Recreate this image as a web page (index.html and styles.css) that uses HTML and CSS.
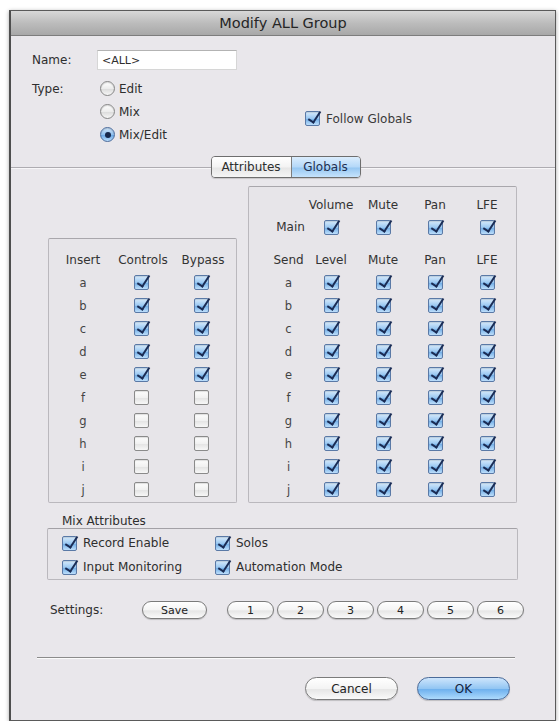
FILE: index.html
```html
<!DOCTYPE html>
<html>
<head>
<meta charset="utf-8">
<title>Modify ALL Group</title>
<link rel="stylesheet" href="styles.css">
</head>
<body>
<div class="dialog">
  <div class="titlebar">Modify ALL Group</div>

  <div class="name-row">
    <span class="lbl-name">Name:</span>
    <div class="name-input">&lt;ALL&gt;</div>
  </div>

  <div class="type-row">
    <span class="lbl-type">Type:</span>
    <div class="radios">
      <div class="radio-item"><span class="radio"></span><span>Edit</span></div>
      <div class="radio-item"><span class="radio"></span><span>Mix</span></div>
      <div class="radio-item"><span class="radio on"><span class="dot"></span></span><span>Mix/Edit</span></div>
    </div>
    <div class="follow"><i class="cb on"></i><span>Follow Globals</span></div>
  </div>

  <div class="tabrow">
    <div class="tabs">
      <div class="tab tab-attr">Attributes</div>
      <div class="tab tab-glob">Globals</div>
    </div>
  </div>

  <div class="boxes">
    <div class="box box-insert">
      <div class="grid-insert">
        <span class="hd">Insert</span><span class="hd">Controls</span><span class="hd">Bypass</span>
        <span class="lt">a</span><span class="cell"><i class="cb on"></i></span><span class="cell"><i class="cb on"></i></span>
        <span class="lt">b</span><span class="cell"><i class="cb on"></i></span><span class="cell"><i class="cb on"></i></span>
        <span class="lt">c</span><span class="cell"><i class="cb on"></i></span><span class="cell"><i class="cb on"></i></span>
        <span class="lt">d</span><span class="cell"><i class="cb on"></i></span><span class="cell"><i class="cb on"></i></span>
        <span class="lt">e</span><span class="cell"><i class="cb on"></i></span><span class="cell"><i class="cb on"></i></span>
        <span class="lt">f</span><span class="cell"><i class="cb"></i></span><span class="cell"><i class="cb"></i></span>
        <span class="lt">g</span><span class="cell"><i class="cb"></i></span><span class="cell"><i class="cb"></i></span>
        <span class="lt">h</span><span class="cell"><i class="cb"></i></span><span class="cell"><i class="cb"></i></span>
        <span class="lt">i</span><span class="cell"><i class="cb"></i></span><span class="cell"><i class="cb"></i></span>
        <span class="lt">j</span><span class="cell"><i class="cb"></i></span><span class="cell"><i class="cb"></i></span>
      </div>
    </div>

    <div class="box box-globals">
      <div class="grid-globals">
        <span></span><span class="hd">Volume</span><span class="hd">Mute</span><span class="hd">Pan</span><span class="hd">LFE</span>
        <span class="lt main">Main</span><span class="cell"><i class="cb on"></i></span><span class="cell"><i class="cb on"></i></span><span class="cell"><i class="cb on"></i></span><span class="cell"><i class="cb on"></i></span>
        <span class="spacer"></span>
        <span class="hd">Send</span><span class="hd">Level</span><span class="hd">Mute</span><span class="hd">Pan</span><span class="hd">LFE</span>
        <span class="lt">a</span><span class="cell"><i class="cb on"></i></span><span class="cell"><i class="cb on"></i></span><span class="cell"><i class="cb on"></i></span><span class="cell"><i class="cb on"></i></span>
        <span class="lt">b</span><span class="cell"><i class="cb on"></i></span><span class="cell"><i class="cb on"></i></span><span class="cell"><i class="cb on"></i></span><span class="cell"><i class="cb on"></i></span>
        <span class="lt">c</span><span class="cell"><i class="cb on"></i></span><span class="cell"><i class="cb on"></i></span><span class="cell"><i class="cb on"></i></span><span class="cell"><i class="cb on"></i></span>
        <span class="lt">d</span><span class="cell"><i class="cb on"></i></span><span class="cell"><i class="cb on"></i></span><span class="cell"><i class="cb on"></i></span><span class="cell"><i class="cb on"></i></span>
        <span class="lt">e</span><span class="cell"><i class="cb on"></i></span><span class="cell"><i class="cb on"></i></span><span class="cell"><i class="cb on"></i></span><span class="cell"><i class="cb on"></i></span>
        <span class="lt">f</span><span class="cell"><i class="cb on"></i></span><span class="cell"><i class="cb on"></i></span><span class="cell"><i class="cb on"></i></span><span class="cell"><i class="cb on"></i></span>
        <span class="lt">g</span><span class="cell"><i class="cb on"></i></span><span class="cell"><i class="cb on"></i></span><span class="cell"><i class="cb on"></i></span><span class="cell"><i class="cb on"></i></span>
        <span class="lt">h</span><span class="cell"><i class="cb on"></i></span><span class="cell"><i class="cb on"></i></span><span class="cell"><i class="cb on"></i></span><span class="cell"><i class="cb on"></i></span>
        <span class="lt">i</span><span class="cell"><i class="cb on"></i></span><span class="cell"><i class="cb on"></i></span><span class="cell"><i class="cb on"></i></span><span class="cell"><i class="cb on"></i></span>
        <span class="lt">j</span><span class="cell"><i class="cb on"></i></span><span class="cell"><i class="cb on"></i></span><span class="cell"><i class="cb on"></i></span><span class="cell"><i class="cb on"></i></span>
      </div>
    </div>
  </div>

  <div class="mix-label">Mix Attributes</div>
  <div class="mix-box">
    <div class="opt"><i class="cb on"></i><span>Record Enable</span></div>
    <div class="opt"><i class="cb on"></i><span>Solos</span></div>
    <div class="opt"><i class="cb on"></i><span>Input Monitoring</span></div>
    <div class="opt"><i class="cb on"></i><span>Automation Mode</span></div>
  </div>

  <div class="settings">
    <span class="settings-lbl">Settings:</span>
    <div class="btn btn-sm btn-save">Save</div>
    <div class="nums">
      <div class="btn btn-sm btn-num">1</div>
      <div class="btn btn-sm btn-num">2</div>
      <div class="btn btn-sm btn-num">3</div>
      <div class="btn btn-sm btn-num">4</div>
      <div class="btn btn-sm btn-num">5</div>
      <div class="btn btn-sm btn-num">6</div>
    </div>
  </div>

  <div class="sep"></div>

  <div class="actions">
    <div class="btn btn-lg">Cancel</div>
    <div class="btn btn-lg btn-ok">OK</div>
  </div>
</div>
</body>
</html>
```
FILE: styles.css
```css
* { box-sizing: border-box; }

body {
  margin: 0;
  padding: 10px 0 0 9px;
  background: #ffffff;
  font-family: "DejaVu Sans", "Liberation Sans", sans-serif;
  font-size: 12px;
  color: #2e2e2e;
}

.dialog {
  width: 547px;
  height: 711px;
  border: 1px solid #5a5a5a;
  border-left: 2px solid #4e4e4e;
  background: #e9e7eb;
  box-shadow: 0 1px 4px rgba(0, 0, 0, 0.35);
  display: flex;
  flex-direction: column;
}

.titlebar {
  height: 25px;
  flex: none;
  background: linear-gradient(#d8d8d8, #bcbcbc 50%, #a8a8a8);
  border-bottom: 1px solid #7d7d7d;
  display: flex;
  align-items: center;
  justify-content: center;
  font-size: 14.5px;
  color: #262626;
}

/* ---------- name / type ---------- */
.name-row {
  display: flex;
  align-items: center;
  margin: 14px 0 0 21px;
  height: 20px;
}
.lbl-name { width: 65px; }
.name-input {
  width: 140px;
  height: 20px;
  background: #fff;
  border: 1px solid #d6d6d6;
  border-top-color: #b3b3b3;
  padding: 0 4px;
  font-size: 11px;
  display: flex;
  align-items: center;
}

.type-row {
  display: flex;
  align-items: flex-start;
  margin: 7px 0 0 21px;
}
.lbl-type {
  width: 68px;
  height: 23px;
  display: flex;
  align-items: center;
}
.radios {
  width: 100px;
  display: flex;
  flex-direction: column;
}
.radio-item {
  height: 23px;
  display: flex;
  align-items: center;
  gap: 4px;
}
.radio {
  width: 15px;
  height: 15px;
  border-radius: 50%;
  border: 1px solid #868686;
  background: linear-gradient(#ffffff, #ececec 50%, #dcdcdc 55%, #f6f6f6);
  box-shadow: inset 0 1px 1px rgba(0, 0, 0, 0.15);
  display: inline-flex;
  align-items: center;
  justify-content: center;
}
.radio.on {
  border-color: #4b6b9b;
  background: linear-gradient(#d3e8fc, #8fc0ee 50%, #6aa8e5 55%, #b8dcfb);
}
.radio .dot {
  width: 6px;
  height: 6px;
  border-radius: 50%;
  background: #17284b;
}

.follow {
  margin: 30px 0 0 105px;
  height: 23px;
  display: flex;
  align-items: center;
  gap: 6px;
  color: #3a3a3a;
}

/* ---------- checkbox ---------- */
.cb {
  display: inline-block;
  position: relative;
  width: 15px;
  height: 15px;
  border: 1px solid #8a8a8a;
  border-radius: 2px;
  background: linear-gradient(#fdfdfd, #f1f1f1 50%, #e4e4e4 55%, #f7f7f7);
  box-shadow: inset 0 1px 1px rgba(0, 0, 0, 0.12);
  flex: none;
}
.cb.on {
  border-color: #5a79a6;
  background: linear-gradient(#d8ebfc, #9ac8f2 50%, #74b0e8 55%, #bddefb);
}
.cb.on::after {
  content: "";
  position: absolute;
  left: 5px;
  top: -3px;
  width: 5px;
  height: 12px;
  border-right: 2.5px solid #1a2c55;
  border-bottom: 2.5px solid #1a2c55;
  transform: rotate(33deg);
}

/* ---------- tabs ---------- */
.tabrow {
  margin-top: 10px;
  height: 22px;
  flex: none;
  display: flex;
  justify-content: center;
  padding-left: 5px;
  background: linear-gradient(to bottom,
    transparent 11px, #aeacb1 11px, #aeacb1 12px,
    #f7f6f8 12px, #f7f6f8 13px, transparent 13px);
}
.tabs {
  display: flex;
  height: 22px;
  border: 1px solid #6e6e6e;
  border-radius: 4px;
  overflow: hidden;
  box-shadow: 0 1px 1px rgba(0, 0, 0, 0.15);
}
.tab {
  display: flex;
  align-items: center;
  justify-content: center;
}
.tab-attr {
  width: 80px;
  background: linear-gradient(#ffffff, #f3f3f3 50%, #e6e6e6 55%, #f5f5f5);
  border-right: 1px solid #7d7d7d;
}
.tab-glob {
  width: 68px;
  background: linear-gradient(#dbedfd, #b4d8f8 50%, #96c7f2 55%, #c6e3fc);
  color: #1f3050;
}

/* ---------- boxes ---------- */
.boxes {
  display: flex;
  align-items: flex-end;
  gap: 11px;
  margin: 8px 0 0 37px;
}
.box {
  border: 1px solid #bab8bd;
  border-top-color: #a9a7ac;
  border-radius: 2px;
  background: #e7e5e9;
}
.box-insert {
  width: 189px;
  padding: 10px 0 1px 4px;
}
.box-globals {
  width: 269px;
  padding: 7px 0 1px 23px;
}

.grid-insert {
  display: grid;
  grid-template-columns: 60px 60px 60px;
  grid-template-rows: 22px repeat(10, 23px);
}
.grid-globals {
  display: grid;
  grid-template-columns: 33px 52px 52px 52px 52px;
  grid-template-rows: 22px 22px 11px 22px repeat(10, 23px);
}
.spacer { grid-column: 1 / -1; }

.hd, .lt, .cell {
  display: flex;
  align-items: center;
  justify-content: center;
}
.hd { color: #333; }
.lt { color: #444; font-size: 11.5px; }
.lt.main { font-size: 12px; color: #333; padding-left: 4px; }
.grid-insert .cell { padding-right: 4px; }

/* ---------- mix attributes ---------- */
.mix-label {
  margin: 11px 0 0 51px;
  height: 14px;
  line-height: 14px;
}
.mix-box {
  margin-left: 36px;
  width: 471px;
  padding: 3px 0 1px 14px;
  border: 1px solid #bab8bd;
  border-top-color: #a3a1a6;
  border-radius: 2px;
  background: #e7e5e9;
  display: grid;
  grid-template-columns: 153px auto;
  grid-auto-rows: 22px;
  row-gap: 2px;
}
.opt {
  display: flex;
  align-items: center;
  gap: 6px;
}

/* ---------- buttons ---------- */
.btn {
  display: flex;
  align-items: center;
  justify-content: center;
  border: 1px solid #7b7b7b;
  background: linear-gradient(#ffffff, #f4f4f4 50%, #e6e6e6 55%, #fafafa);
  box-shadow: 0 1px 1px rgba(0, 0, 0, 0.18);
  color: #222;
}
.btn-sm {
  height: 18px;
  border-radius: 9px;
  font-size: 11px;
}
.btn-lg {
  width: 93px;
  height: 23px;
  border-radius: 12px;
  font-size: 12px;
}
.btn-ok {
  border-color: #4b6b99;
  background: linear-gradient(#cde5fc, #93c6f3 50%, #6fb1ee 55%, #addafc);
  color: #132440;
}

.settings {
  display: flex;
  align-items: center;
  margin: 21px 0 0 39px;
  height: 18px;
}
.settings-lbl { width: 92px; }
.btn-save { width: 65px; margin-right: 20px; }
.nums { display: flex; gap: 3px; }
.btn-num { width: 47px; }

.sep {
  margin: 38px 0 0 26px;
  width: 478px;
  height: 2px;
  border-top: 1px solid #8b8b8b;
  border-bottom: 1px solid #fbfbfb;
  flex: none;
}

.actions {
  display: flex;
  justify-content: flex-end;
  gap: 19px;
  margin-top: 18px;
  padding-right: 45px;
}
```
